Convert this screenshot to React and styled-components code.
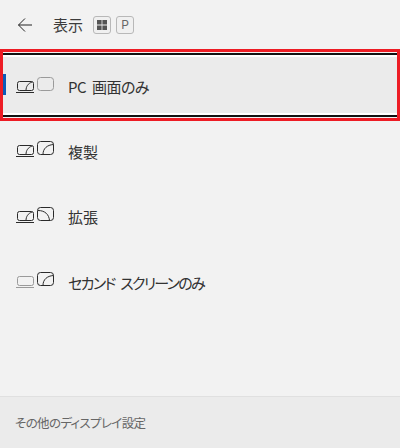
import React from 'react';
import styled, { createGlobalStyle } from 'styled-components';

const Global = createGlobalStyle`
  html, body {
    margin: 0;
    padding: 0;
    background: #f2f2f2;
  }
  body {
    font-family: "Noto Sans CJK JP", "Noto Sans", sans-serif;
    font-feature-settings: "palt";
  }
`

const Panel = styled.div`
  width: 400px;
  height: 448px;
  display: flex;
  flex-direction: column;
  background: #f2f2f2;
  overflow: hidden;
`

const Header = styled.div`
  flex: 0 0 49px;
  display: flex;
  align-items: center;
  padding: 0 0 0 18px;
  box-sizing: border-box;
  color: #3c3c3c;
`

const Title = styled.span`
  font-size: 15px;
  margin-left: 21px;
  margin-right: 10px;
`

const Key = styled.span`
  width: 18px;
  height: 18px;
  box-sizing: border-box;
  margin-right: 5px;
  border: 1px solid #b8b8b8;
  border-radius: 3px;
  background: #f0f0f0;
  display: flex;
  align-items: center;
  justify-content: center;
  font: 12px "Inter", sans-serif;
  color: #666;
`

const List = styled.div`
  flex: 1;
  display: flex;
  flex-direction: column;
`

const Selected = styled.div`
  height: 72px;
  margin-bottom: -2px;
  box-sizing: border-box;
  border: 3px solid #ed1c24;
  background: #f2f2f2;
  padding: 1px 0;
  display: flex;
`

const SelectedInner = styled.div`
  flex: 1;
  border-top: 2px solid #111;
  border-bottom: 2px solid #111;
  box-shadow: inset 0 2px 0 #fff, inset 0 -2px 0 #fff;
  background: #ebebeb;
  display: flex;
  align-items: center;
  position: relative;
  padding: 4px 0 0 13px;
`

const Accent = styled.i`
  position: absolute;
  left: 0;
  top: 19px;
  width: 3px;
  height: 21px;
  background: #0b5cb8;
`

const Row = styled.div`
  height: 65.6px;
  display: flex;
  align-items: center;
  padding: 0 0 0 16px;
`

const IconBox = styled.svg`
  display: block;
  margin-top: -4px;
`

const Label = styled.span`
  margin-left: 13px;
  font-size: 15px;
  line-height: 20px;
  letter-spacing: ${(p) => p.$tight || 0}px;
  word-spacing: ${(p) => p.$gap || 0}px;
  color: #333;
`

const Footer = styled.div`
  flex: 0 0 51px;
  display: flex;
  align-items: center;
  padding-left: 15px;
  border-top: 1px solid #e0e0e0;
  background: #ebebeb;
  font-size: 12.5px;
  letter-spacing: -0.65px;
  color: #666;
`

const WinGlyph = () => (
  <svg width="12" height="12" viewBox="0 0 12 12">
    <path d="M1 1h4.6v4.6H1zM6.4 1H11v4.6H6.4zM1 6.4h4.6V11H1zM6.4 6.4H11V11H6.4z" fill="#555" />
  </svg>
)

const ModeIcon = ({ laptopOn = true, arc }) => {
  const laptop = laptopOn ? '#2a2a2a' : '#9a9a9a'
  const screen = arc ? '#2a2a2a' : '#9a9a9a'
  return (
    <IconBox width="39" height="17" viewBox="0 0 39 17" fill="none">
      <rect x="1.5" y="4.5" width="16" height="9" rx="2" stroke={laptop} />
      <path d="M0 15.5h18" stroke={laptop} />
      {laptopOn && <path d="M10 13.5c0-4 2-7 6-8.5" stroke={laptop} />}
      <rect x="21.5" y="0.5" width="16" height="13" rx="3" stroke={screen} />
      {arc === 'right' && <path d="M27 13.5c0-6 4-9.5 10.5-10" stroke={screen} />}
      {arc === 'left' && <path d="M22 3.5c7 0 11 4 11.5 10" stroke={screen} />}
    </IconBox>
  )
}

export default function App() {
  return (
    <Panel>
      <Global />
      <Header>
        <svg width="14" height="14" viewBox="0 0 14 14" fill="none" stroke="#222">
          <path d="M0.5 7h13.5M7 0.5 0.5 7 7 13.5" />
        </svg>
        <Title>表示</Title>
        <Key><WinGlyph /></Key>
        <Key>P</Key>
      </Header>
      <List>
        <Selected>
          <SelectedInner>
            <Accent />
            <ModeIcon />
            <Label $tight={-0.5} $gap={3}>PC 画面のみ</Label>
          </SelectedInner>
        </Selected>
        <Row><ModeIcon arc="right" /><Label>複製</Label></Row>
        <Row><ModeIcon arc="left" /><Label>拡張</Label></Row>
        <Row><ModeIcon laptopOn={false} arc="right" /><Label $tight={-1.7} $gap={4}>セカンド スクリーンのみ</Label></Row>
      </List>
      <Footer>その他のディスプレイ設定</Footer>
    </Panel>
  )
}
